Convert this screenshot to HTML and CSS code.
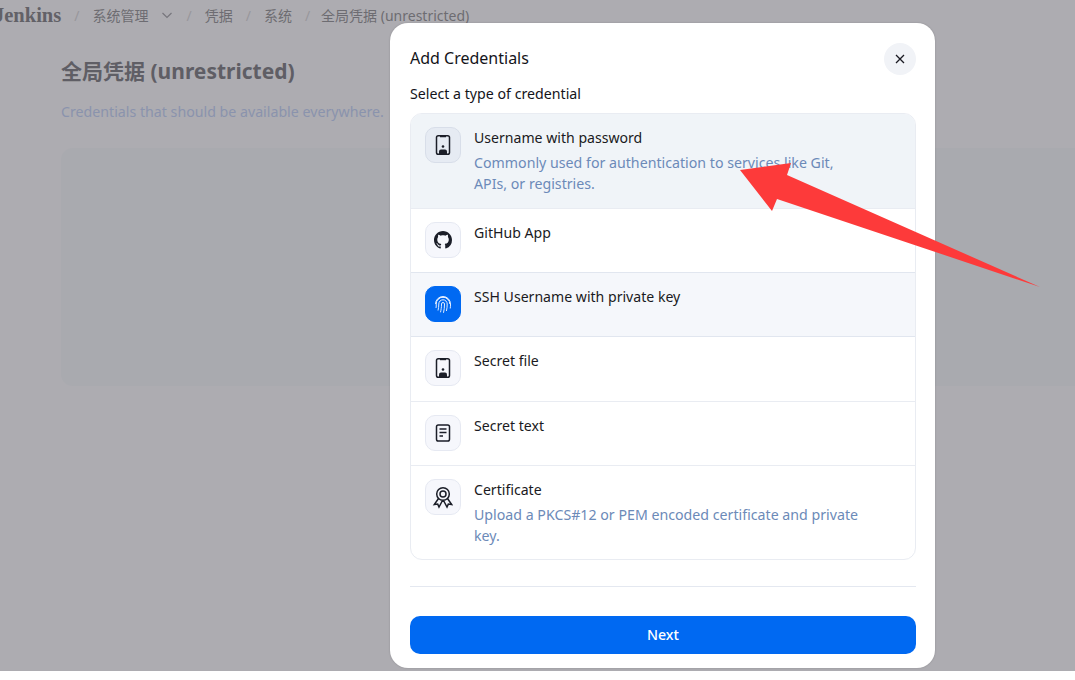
FILE: index.html
```html
<!DOCTYPE html>
<html lang="en">
<head>
    <meta charset="UTF-8">
    <meta name="viewport" content="width=device-width, initial-scale=1.0">
    <title>Add Credentials</title>
    <link rel="stylesheet" href="styles.css">
</head>
<body>
    <div class="page">
        <header class="crumbs">
            <span class="brand">Jenkins</span>
            <span class="sep">/</span>
            <span>系统管理</span>
            <svg class="chevron" viewBox="0 0 12 12"><path d="M1.500 4l4.500 4.500L10.500 4"/></svg>
            <span class="sep">/</span>
            <span>凭据</span>
            <span class="sep">/</span>
            <span>系统</span>
            <span class="sep">/</span>
            <span class="crumb-last">全局凭据 (unrestricted)</span>
        </header>
        <main class="content">
            <h1>全局凭据 (unrestricted)</h1>
            <p class="lead">Credentials that should be available everywhere.</p>
            <div class="empty-card"></div>
        </main>

        <div class="modal">
            <div class="modal-head">
                <h2>Add Credentials</h2>
                <button class="close" type="button">
                    <svg viewBox="0 0 12 12"><path d="M2 2l8 8M10 2l-8 8"/></svg>
                </button>
            </div>
            <div class="modal-label">Select a type of credential</div>
            <div class="type-list">
                <div class="type-row selected">
                    <div class="type-icon">
                        <svg viewBox="0 0 24 24"><rect x="5.500" y="2.700" width="13" height="18.600" rx="1.800"/><path d="M9 3.200h6" class="thick"/><circle cx="12" cy="13.500" r="1.300" class="solid"/><path d="M8 21v-2.500a2 2 0 0 1 2-2h4a2 2 0 0 1 2 2V21z" class="solid"/></svg>
                    </div>
                    <div class="type-text">
                        <div class="type-name">Username with password</div>
                        <div class="type-desc">Commonly used for authentication to services like Git,<br>APIs, or registries.</div>
                    </div>
                </div>
                <div class="type-row">
                    <div class="type-icon">
                        <svg class="small" viewBox="0 0 16 16"><path class="solid" d="M8 0C3.580 0 0 3.580 0 8c0 3.540 2.290 6.530 5.470 7.590.4.070.55-.17.55-.38 0-.19-.01-.82-.01-1.490-2.010.37-2.530-.49-2.690-.94-.09-.23-.48-.94-.82-1.130-.28-.15-.68-.52-.01-.53.63-.01 1.080.58 1.230.82.72 1.210 1.870.87 2.330.66.070-.52.280-.87.510-1.070-1.780-.2-3.640-.89-3.640-3.950 0-.87.310-1.590.820-2.150-.08-.2-.360-1.020.080-2.120 0 0 .67-.21 2.200.82.640-.18 1.320-.27 2-.27s1.360.09 2 .27c1.530-1.040 2.200-.82 2.200-.82.440 1.100.160 1.920.080 2.120.51.560.820 1.270.820 2.150 0 3.070-1.870 3.750-3.650 3.950.290.250.540.730.540 1.480 0 1.070-.01 1.930-.01 2.200 0 .21.150.46.550.38A8.010 8.010 0 0 0 16 8c0-4.420-3.580-8-8-8z"/></svg>
                    </div>
                    <div class="type-text">
                        <div class="type-name">GitHub App</div>
                    </div>
                </div>
                <div class="type-row tinted">
                    <div class="type-icon blue">
                        <svg viewBox="0 0 24 24"><path d="M6.500 7.500a7.500 7.500 0 0 1 11 0M4.500 12a7.500 7.500 0 0 1 15 0c0 1.500 0 3-.3 4.500M5 16a15 15 0 0 0 .2-4 6.800 6.800 0 0 1 13.600 0M7 18.500c.5-2 .8-4 .8-6.500a4.200 4.200 0 0 1 8.400 0c0 2.500-.2 5-.8 7M9.500 20.300c.6-2.500 1-5 1-8.300a1.500 1.500 0 0 1 3 0c0 3-.3 6-1 8.800"/></svg>
                    </div>
                    <div class="type-text">
                        <div class="type-name">SSH Username with private key</div>
                    </div>
                </div>
                <div class="type-row">
                    <div class="type-icon">
                        <svg viewBox="0 0 24 24"><rect x="5.500" y="2.700" width="13" height="18.600" rx="1.800"/><path d="M9 3.200h6" class="thick"/><circle cx="12" cy="13.500" r="1.300" class="solid"/><path d="M8 21v-2.500a2 2 0 0 1 2-2h4a2 2 0 0 1 2 2V21z" class="solid"/></svg>
                    </div>
                    <div class="type-text">
                        <div class="type-name">Secret file</div>
                    </div>
                </div>
                <div class="type-row">
                    <div class="type-icon">
                        <svg viewBox="0 0 24 24"><rect x="5.500" y="4" width="13" height="16" rx="1.800"/><path d="M8.500 8h7M8.500 11.500h7M8.500 15h3.500"/></svg>
                    </div>
                    <div class="type-text">
                        <div class="type-name">Secret text</div>
                    </div>
                </div>
                <div class="type-row">
                    <div class="type-icon">
                        <svg viewBox="0 0 24 24"><circle cx="12" cy="9" r="6.300"/><circle cx="12" cy="9" r="3"/><path d="M7.500 13.500L3.300 19.500l3.400-.4 1.300 2.900 3.500-6.500M16.500 13.500l4.200 6-3.400-.4-1.300 2.900-3.500-6.500"/></svg>
                    </div>
                    <div class="type-text">
                        <div class="type-name">Certificate</div>
                        <div class="type-desc">Upload a PKCS#12 or PEM encoded certificate and private<br>key.</div>
                    </div>
                </div>
            </div>
            <div class="modal-rule"></div>
            <button class="next" type="button">Next</button>
        </div>

        <svg class="arrow" viewBox="0 0 1075 680">
            <polygon points="740,170 791,163 787,175 1040,287 777,199 772,211"/>
        </svg>
    </div>
</body>
</html>
```

FILE: styles.css
```css
* { box-sizing: border-box; }
html, body {
    margin: 0;
    background: #fff;
}
body {
    font-family: "Noto Sans", "Noto Sans CJK SC", sans-serif;
    overflow: hidden;
}
.page {
    position: relative;
    height: 671px;
    background: #adacb1;
    overflow: hidden;
}

/* dimmed page behind the dialog */
.crumbs {
    display: flex;
    align-items: center;
    gap: 13px;
    height: 30px;
    margin-left: -6px;
    font-size: 14px;
    color: #6d6c72;
}
.brand {
    font-family: "Liberation Serif", serif;
    font-weight: bold;
    font-size: 20.500px;
    color: #626167;
}
.sep { color: #98979c; }
.chevron {
    width: 12px;
    height: 12px;
}
.chevron path {
    fill: none;
    stroke: #77767d;
    stroke-width: 1.200;
}
.crumb-last { margin-left: -2px; }
.content { padding: 26px 0 0 61px; }
.content h1 {
    margin: 0;
    font-size: 21px;
    line-height: 30px;
    font-weight: bold;
    color: #5f5e65;
}
.lead {
    margin: 16px 0 0;
    font-size: 14.200px;
    line-height: 20px;
    color: #8a93ad;
}
.empty-card {
    height: 238px;
    margin-top: 26px;
    background: #a9aaaf;
    border-radius: 12px 0 0 12px;
}

/* dialog */
.modal {
    position: absolute;
    left: 390px;
    top: 23px;
    width: 545px;
    height: 645px;
    padding: 20px;
    background: #fff;
    border-radius: 18px;
    box-shadow: 0 0 2px rgba(0, 0, 0, 0.2);
}
.modal-head {
    display: flex;
    align-items: center;
    justify-content: space-between;
    height: 32px;
}
.modal-head h2 {
    margin: 0 0 2px;
    font-size: 16px;
    font-weight: 400;
    color: #14141a;
}
.close {
    display: flex;
    align-items: center;
    justify-content: center;
    width: 32px;
    height: 32px;
    margin-right: -1px;
    padding: 0;
    border: 0;
    border-radius: 50%;
    background: #f1f3f7;
}
.close svg {
    width: 12px;
    height: 12px;
}
.close path {
    fill: none;
    stroke: #1a1a22;
    stroke-width: 1.300;
}
.modal-label {
    margin-top: 9px;
    font-size: 14.200px;
    line-height: 20px;
    color: #14141a;
}
.type-list {
    width: 506px;
    margin-top: 9px;
    border: 1px solid #e9ecf2;
    border-radius: 12px;
    overflow: hidden;
}
.type-row {
    display: flex;
    gap: 13px;
    min-height: 64.200px;
    padding: 13px 14px;
    border-top: 1px solid #e9ecf2;
}
.type-row:first-child { border-top: 0; }
.type-row.selected {
    min-height: 94px;
    background: #f0f4f8;
}
.type-row.tinted { background: #f5f7fb; }
.tinted, .tinted + .type-row { border-top-color: #e1e6ef; }
.type-icon {
    display: flex;
    flex: none;
    align-items: center;
    justify-content: center;
    width: 36px;
    height: 36px;
    border: 1px solid #e6e9f2;
    border-radius: 10px;
    background: #f6f7fc;
}
.selected .type-icon {
    background: #e6ebf3;
    border-color: #d8dee9;
}
.type-icon.blue {
    background: #0069f2;
    border-color: #0069f2;
}
.type-icon svg {
    width: 24px;
    height: 24px;
}
.type-icon svg.small {
    width: 18px;
    height: 18px;
}
.type-icon svg * {
    fill: none;
    stroke: #1b1e28;
    stroke-width: 1.500;
}
.type-icon svg .solid {
    fill: #1b1e28;
    stroke: none;
}
.type-icon svg .thick { stroke-width: 2; }
.type-icon.blue svg * {
    stroke: #e4eeff;
    stroke-width: 1;
}
.type-text { padding-top: 1px; }
.type-name {
    font-size: 14.100px;
    line-height: 20px;
    color: #1a1a22;
}
.type-desc {
    margin-top: 4px;
    font-size: 14.200px;
    line-height: 21px;
    color: #6c8ab8;
}
.modal-rule {
    width: 506px;
    height: 1px;
    margin-top: 26px;
    background: #e4e8f0;
}
.next {
    display: block;
    width: 506px;
    height: 38px;
    margin-top: 29px;
    border: 0;
    border-radius: 10px;
    background: #0069f2;
    color: #fff;
    font-family: inherit;
    font-size: 14.200px;
    font-weight: 500;
}

/* red annotation drawn over the screenshot */
.arrow {
    position: absolute;
    left: 0;
    top: 0;
    width: 1075px;
    height: 680px;
    pointer-events: none;
}
.arrow polygon { fill: #fd3a3a; }
```
